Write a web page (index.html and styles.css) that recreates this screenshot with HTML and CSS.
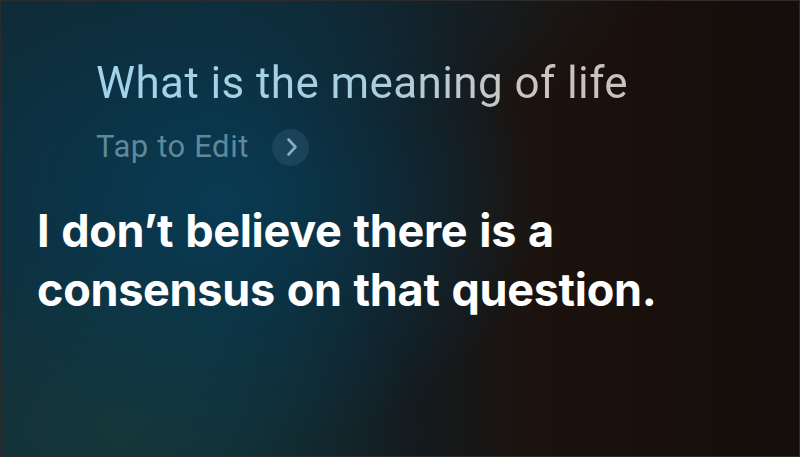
FILE: index.html
```html
<!DOCTYPE html>
<html>
<head>
<meta charset="utf-8">
<link rel="stylesheet" href="styles.css">
</head>
<body>
<div class="screen">
  <div class="query">
    <div class="query-text">What is the meaning of life</div>
    <div class="edit-row">
      <span class="edit-label">Tap to Edit</span>
      <span class="edit-btn">
        <svg width="12" height="20" viewBox="0 0 12 20"><path d="M2.5 2.5 L9.5 10 L2.5 17.5" fill="none" stroke="#86aebd" stroke-width="2.6" stroke-linecap="round" stroke-linejoin="round"/></svg>
      </span>
    </div>
  </div>
  <div class="answer">I don’t believe there is a<br>consensus on that question.</div>
</div>
</body>
</html>
```
FILE: styles.css
```css
html, body {
  margin: 0;
  padding: 0;
  background: #120d0b;
}
.screen {
  box-sizing: border-box;
  width: 800px;
  height: 457px;
  overflow: hidden;
  border: 1px solid #2b2b2b;
  background:
    radial-gradient(ellipse 320px 250px at 220px 200px, rgba(8, 62, 88, 0.85), rgba(8, 62, 88, 0) 100%),
    radial-gradient(ellipse 300px 200px at 120px 430px, rgba(24, 60, 58, 0.7), rgba(24, 60, 58, 0) 100%),
    radial-gradient(ellipse 360px 130px at 280px 0px, rgba(16, 42, 54, 0.8), rgba(16, 42, 54, 0) 100%),
    linear-gradient(90deg, #0f2c38 0%, #0c2a38 28%, #141a1e 52%, #1c120d 68%, #140d0b 100%);
  display: flex;
  flex-direction: column;
  font-family: Roboto, "Liberation Sans", sans-serif;
}
.query {
  padding: 56px 0 0 95px;
  display: flex;
  flex-direction: column;
}
.query-text {
  font-size: 44px;
  font-weight: 400;
  line-height: 52px;
  letter-spacing: 0.4px;
  background: linear-gradient(90deg, #a2d3ea 0%, #a9cfe0 50%, #cac6c2 80%, #c8c2be 100%);
  -webkit-background-clip: text;
  background-clip: text;
  color: transparent;
  width: max-content;
}
.edit-row {
  display: flex;
  align-items: center;
  gap: 23px;
  margin-top: 18px;
}
.edit-label {
  font-size: 31px;
  line-height: 40px;
  letter-spacing: 0.6px;
  color: #5f8898;
}
.edit-btn {
  width: 37px;
  height: 37px;
  border-radius: 50%;
  background: rgba(120, 170, 200, 0.14);
  display: flex;
  align-items: center;
  justify-content: center;
}
.edit-btn svg {
  margin-left: 2px;
}
.answer {
  margin: 34px 0 0 36px;
  font-family: Inter, Roboto, sans-serif;
  font-size: 45px;
  font-weight: 700;
  line-height: 59px;
  letter-spacing: -0.3px;
  word-spacing: 1.5px;
  color: #ffffff;
}
```
